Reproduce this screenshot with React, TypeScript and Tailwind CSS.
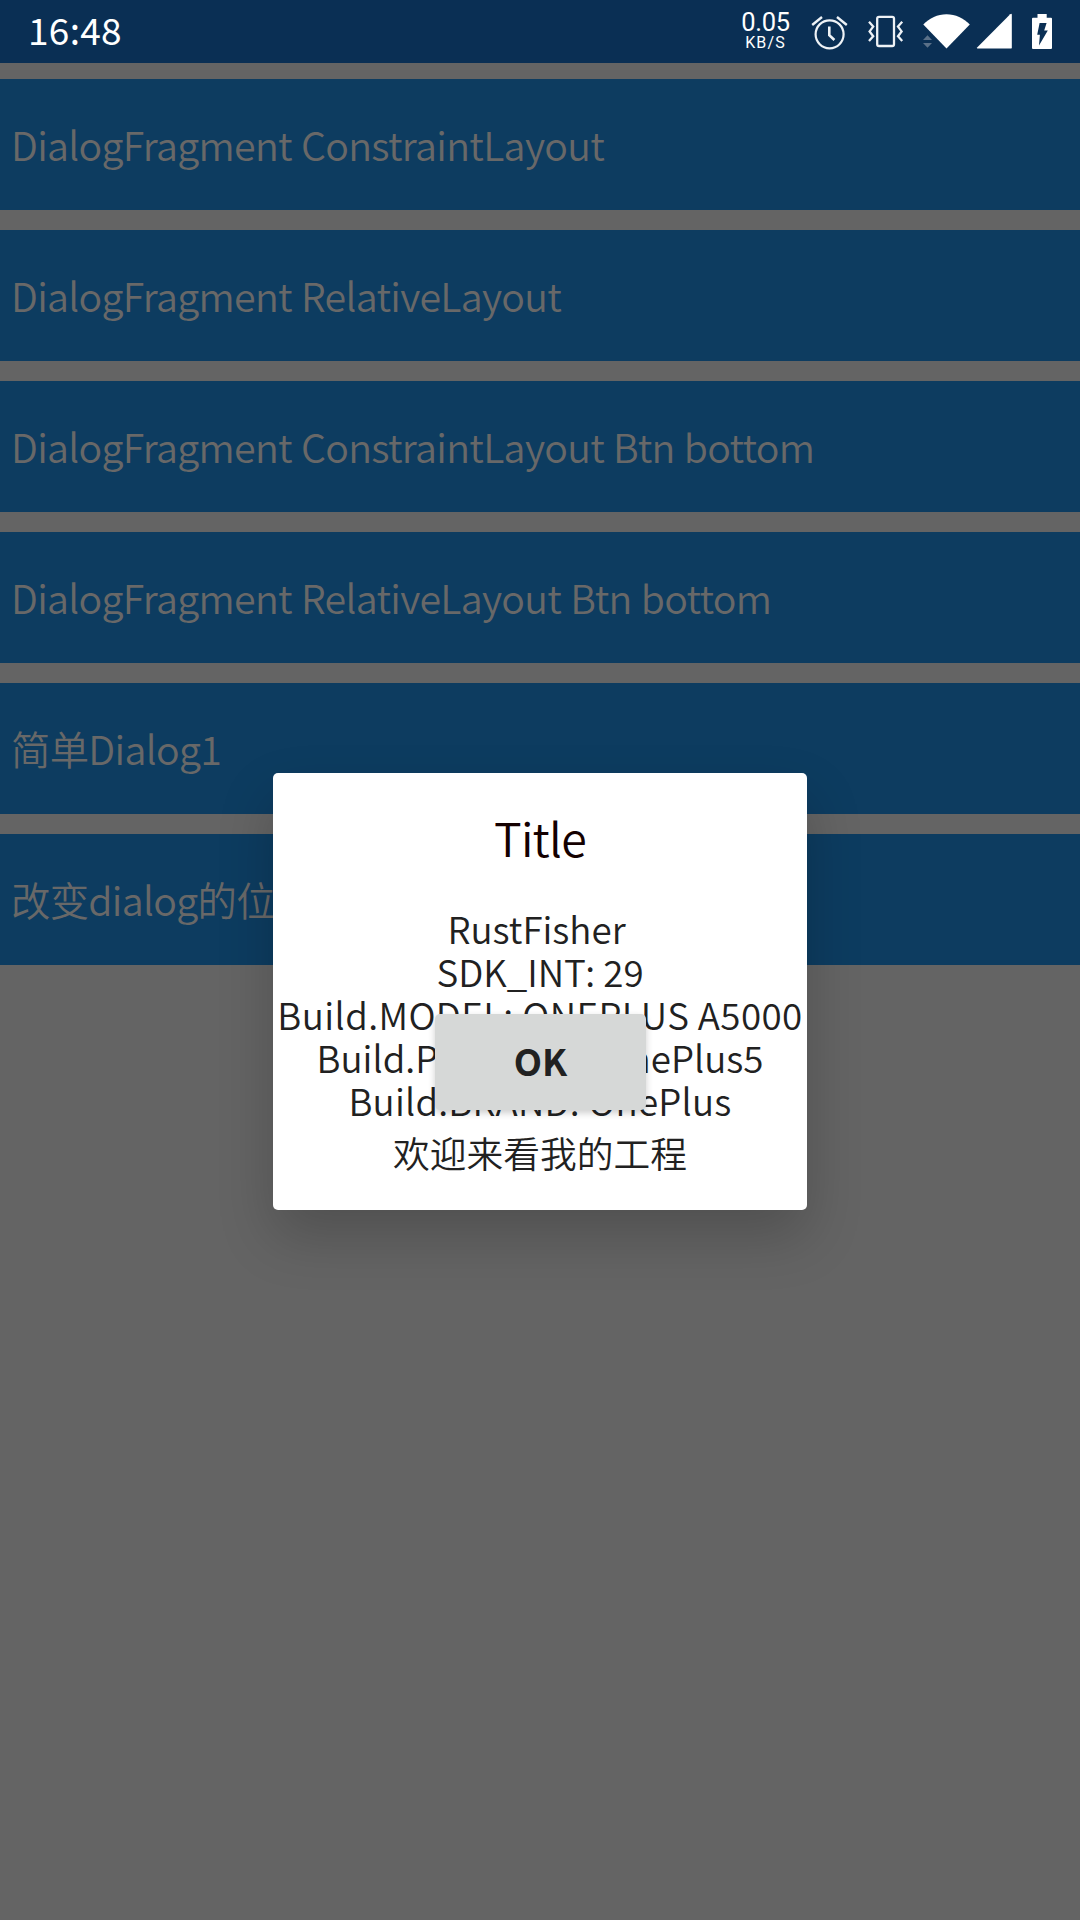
import React from "react";

const rows = [
  "DialogFragment ConstraintLayout",
  "DialogFragment RelativeLayout",
  "DialogFragment ConstraintLayout Btn bottom",
  "DialogFragment RelativeLayout Btn bottom",
  "简单Dialog1",
  "改变dialog的位置",
];

function AlarmIcon() {
  return (
    <svg className="ml-[17px] h-[63px] w-[40px]" viewBox="810 0 40 63" fill="none" stroke="#eef2f6" strokeWidth="2.2">
      <circle cx="829.6" cy="34.3" r="14" />
      <path d="M829.3 26.5V35.2L834.4 40" strokeWidth="2.6" />
      <path d="M812.2 25L822 17M837 17L846.8 25" strokeWidth="2.4" />
    </svg>
  );
}

function VibrateIcon() {
  return (
    <svg className="ml-4 h-[63px] w-[40px]" viewBox="866 0 40 63" fill="none" stroke="#eef2f6" strokeWidth="2.3">
      <rect x="877.2" y="16.8" width="16.8" height="29.2" rx="1.8" />
      <path d="M869 21.8L873.2 26.6L869.6 31.4L873.2 36.2L869 41" />
      <path d="M902.2 21.8L898 26.6L901.6 31.4L898 36.2L902.2 41" />
    </svg>
  );
}

function WifiIcon() {
  return (
    <svg className="ml-4 h-[63px] w-[50px]" viewBox="922 0 50 63">
      <path d="M923.3 24.6C929.5 18 937.5 14.3 946.5 14.3C955.5 14.3 963.5 18 969.8 24.6L946.5 48.6Z" fill="#fff" />
      <path d="M923 40L927.5 35.2L932 40ZM923 43L927.5 47.8L932 43Z" fill="#5a7088" />
    </svg>
  );
}

function SignalIcon() {
  return (
    <svg className="ml-1 h-[63px] w-[38px]" viewBox="976 0 38 63" fill="#fff">
      <path d="M977.6 48.6Q976.4 48.4 977.4 47.2L1010.2 14.2Q1011.7 13.2 1011.8 14.8V47.4Q1011.8 48.6 1010.6 48.6Z" />
    </svg>
  );
}

function BatteryIcon() {
  return (
    <svg className="ml-4 h-[63px] w-[24px]" viewBox="1030 0 24 63">
      <path d="M1037.5 17.7V14H1046.7V17.7H1051Q1052 17.7 1052 18.7V48Q1052 49 1051 49H1033Q1032 49 1032 48V18.7Q1032 17.7 1033 17.7Z" fill="#fff" />
      <path d="M1039.6 23H1046.6L1044.2 30.6H1047.8L1039 45.4L1039.9 34.8H1037.2Z" fill="#0a2f54" />
    </svg>
  );
}

export default function App() {
  return (
    <div className="relative flex h-[1920px] w-[1080px] flex-col overflow-hidden bg-[#646464] font-['Noto_Sans_CJK_SC',sans-serif]">
      <header className="flex h-[63px] items-center bg-[#0a2f54] pr-[26px] pl-[28px] text-white">
        <span className="-mt-[5px] text-[37px] leading-none tracking-[0.3px]">16:48</span>
        <div className="ml-auto flex w-[55px] flex-col items-center font-[Roboto,sans-serif]">
          <span className="text-[25.5px] leading-[22px] tracking-[-0.3px]">0.05</span>
          <span className="mt-[1px] text-[16px] leading-[18px] tracking-[1.1px]">KB/S</span>
        </div>
        <AlarmIcon />
        <VibrateIcon />
        <WifiIcon />
        <SignalIcon />
        <BatteryIcon />
      </header>

      <main className="mt-4 flex flex-col gap-5">
        {rows.map((row) => (
          <div
            key={row}
            className="flex h-[131px] items-center bg-[#0d3c60] pb-px pl-[11px] text-[39.375px] leading-none font-[350] tracking-[-0.7px] [word-spacing:1px] whitespace-nowrap text-[#686868]"
          >
            {row}
          </div>
        ))}
      </main>

      <section className="absolute top-[773px] left-[273px] flex h-[437px] w-[534px] flex-col items-center rounded-[5px] bg-white text-center text-[#212121] shadow-[0_26px_56px_rgba(0,0,0,0.2)]">
        <h1 className="mt-[36px] text-[46.5px] leading-[56px] font-[350] tracking-[-0.8px] text-[#140000]">Title</h1>
        <div className="mt-[42px] flex flex-col text-[36.75px] leading-[43px] font-[350] whitespace-nowrap">
          <span className="pr-[7px]">RustFisher</span>
          <span>SDK_INT: 29</span>
          <span className="tracking-[0.4px]">Build.MODEL: ONEPLUS A5000</span>
          <span>Build.PRODUCT: OnePlus5</span>
          <span className="tracking-[0.2px]">Build.BRAND: OnePlus</span>
          <span className="leading-[60px]">欢迎来看我的工程</span>
        </div>
        <button className="absolute top-[241px] left-[162px] flex h-[96px] w-[211px] items-center justify-center rounded-[5px] bg-[#d6d8d7] pb-[2px] text-[36.75px] font-bold shadow-[0_3px_7px_rgba(0,0,0,0.2)]">
          OK
        </button>
      </section>
    </div>
  );
}
